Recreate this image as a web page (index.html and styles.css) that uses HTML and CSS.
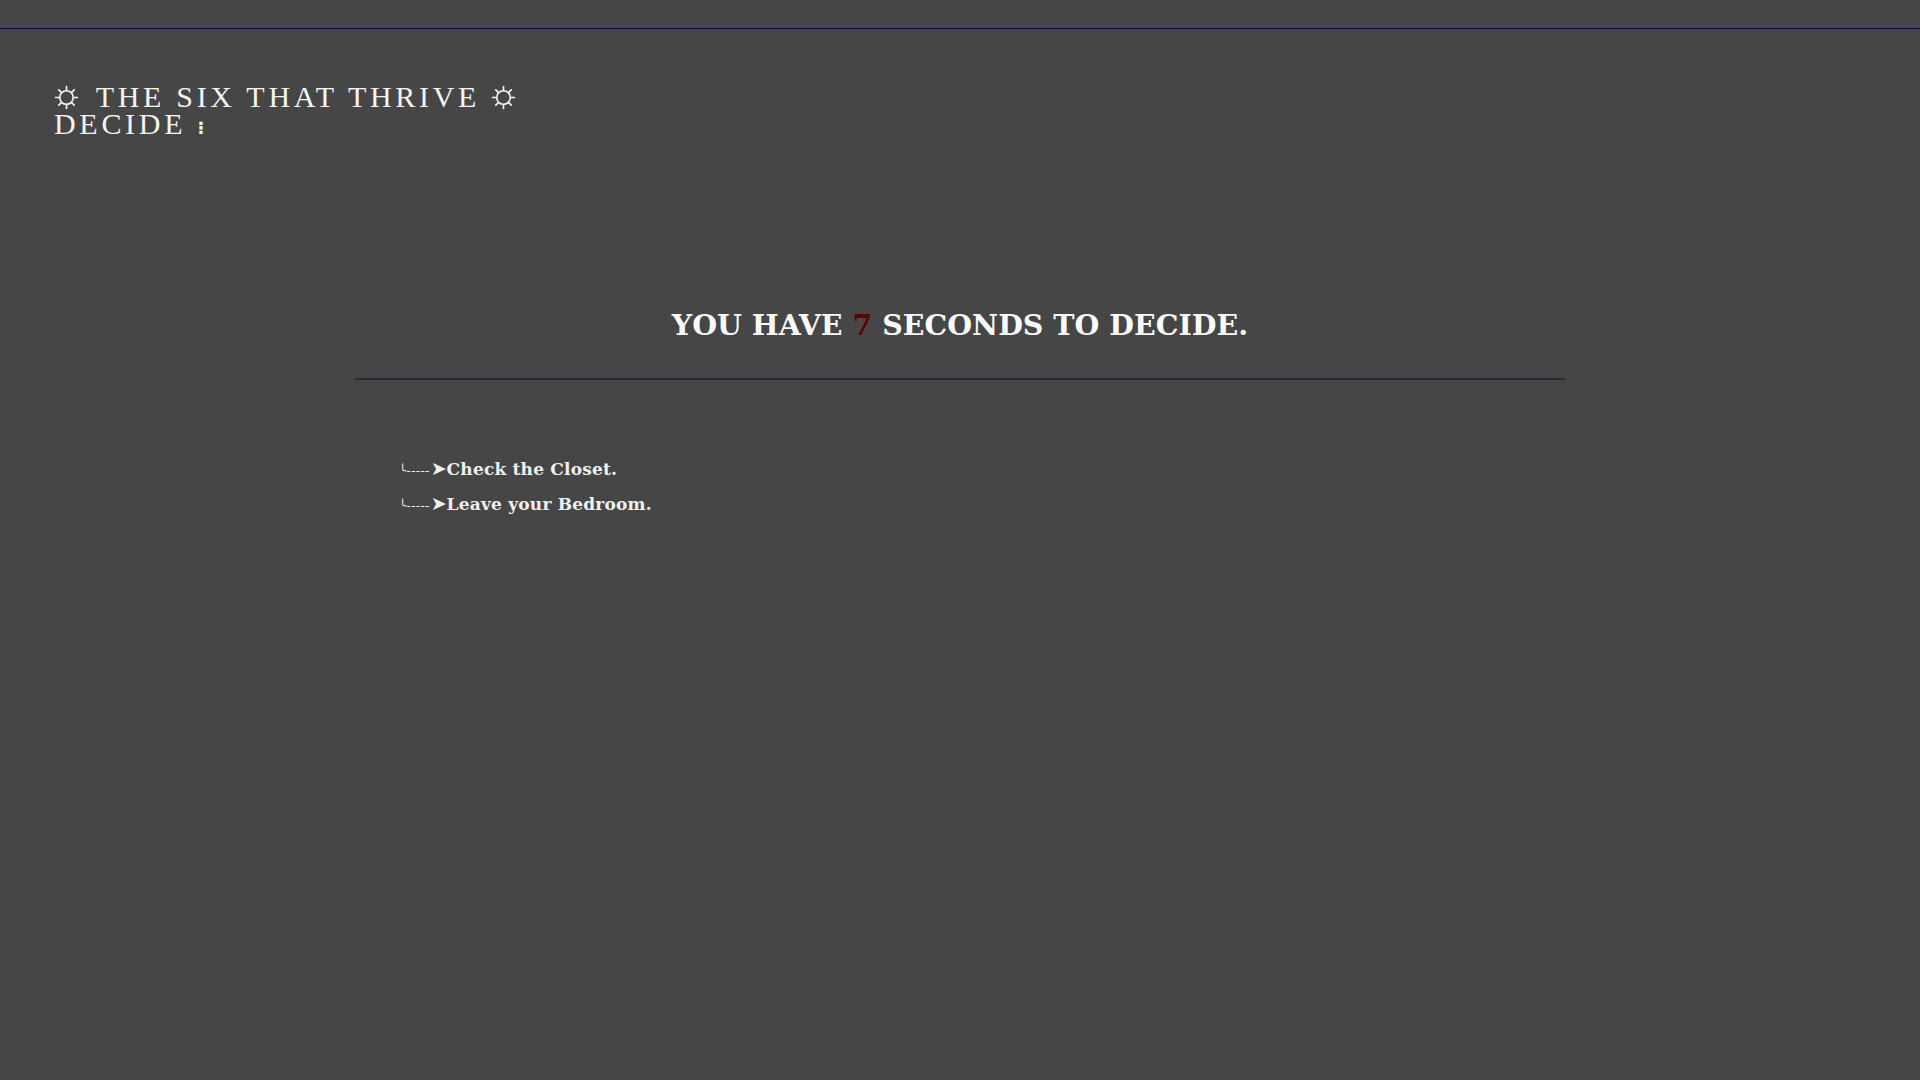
FILE: index.html
```html
<!DOCTYPE html>
<html lang="en">
<head>
  <meta charset="UTF-8">
  <meta name="viewport" content="width=device-width, initial-scale=1.0">
  <title>The Six That Thrive</title>
  <link rel="stylesheet" href="styles.css">
</head>
<body>
  <div class="topbar"></div>

  <header class="title">
    <h1>
      <svg class="sun" viewBox="0 0 24 24"><circle cx="12" cy="12" r="6.5"/><path d="M12 1.5v3.5M12 19v3.5M1.5 12h3.5M19 12h3.5M4.6 4.6l2.4 2.4M17 17l2.4 2.4M4.6 19.4l2.4-2.4M17 7l2.4-2.4"/></svg>
      THE SIX THAT THRIVE
      <svg class="sun" viewBox="0 0 24 24"><circle cx="12" cy="12" r="6.5"/><path d="M12 1.5v3.5M12 19v3.5M1.5 12h3.5M19 12h3.5M4.6 4.6l2.4 2.4M17 17l2.4 2.4M4.6 19.4l2.4-2.4M17 7l2.4-2.4"/></svg>
      <br>DECIDE <span class="dots">&#8285;</span>
    </h1>
  </header>

  <main class="scene">
    <h2 class="timer">YOU HAVE <span class="count">7</span> SECONDS TO DECIDE.</h2>
    <hr class="divider">
    <ul class="choices">
      <li><a href="#closet"><span class="arrow">&#9584;-----<span class="head">&#10148;</span></span>Check the Closet.</a></li>
      <li><a href="#hall"><span class="arrow">&#9584;-----<span class="head">&#10148;</span></span>Leave your Bedroom.</a></li>
    </ul>
  </main>
</body>
</html>
```

FILE: styles.css
```css
body {
  background-color: #464646;
  color: #f4f4f4;
  font-family: "Liberation Serif", serif;
  margin: 0;
}

.topbar {
  height: 28px;
  border-bottom: 1px solid #0b0b30;
}

.title {
  padding: 54px 54px 0;
}

.title h1 {
  margin: 0;
  font-size: 30px;
  font-weight: normal;
  line-height: 27px;
  letter-spacing: 3.7px;
}

/* little sun on each side of the name */
.sun {
  width: 25px;
  height: 25px;
  margin-right: 6px;
  vertical-align: -3px;
  fill: none;
  stroke: #f4f4f4;
  stroke-width: 1.6;
  stroke-linecap: round;
}

.dots {
  font-family: "DejaVu Sans", sans-serif;
  font-weight: bold;
  font-size: 18px;
  line-height: 0;
}

.scene {
  padding-top: 171px;
}

.timer {
  margin: 0;
  text-align: center;
  font-family: "DejaVu Serif", serif;
  font-size: 28.5px;
  font-weight: bold;
  color: #fafafa;
}

.count {
  color: #5c0000;
}

.divider {
  width: 63%;
  margin: 36px auto 0;
  border: 0;
  border-top: 2px solid #262a40;
}

.choices {
  list-style: none;
  margin: 72px 0 0 399px;
  padding: 0;
}

.choices li {
  line-height: 34px;
}

.choices a {
  color: #f0f0f0;
  text-decoration: none;
  font-family: "DejaVu Serif", serif;
  font-size: 17px;
  font-weight: bold;
  letter-spacing: 0.2px;
}

.arrow {
  font-family: "DejaVu Sans", sans-serif;
  font-weight: normal;
  font-size: 12px;
  line-height: 0;
  letter-spacing: 0.3px;
}

.arrow .head {
  font-size: 19px;
  letter-spacing: 0;
  margin-left: 1px;
}
```
